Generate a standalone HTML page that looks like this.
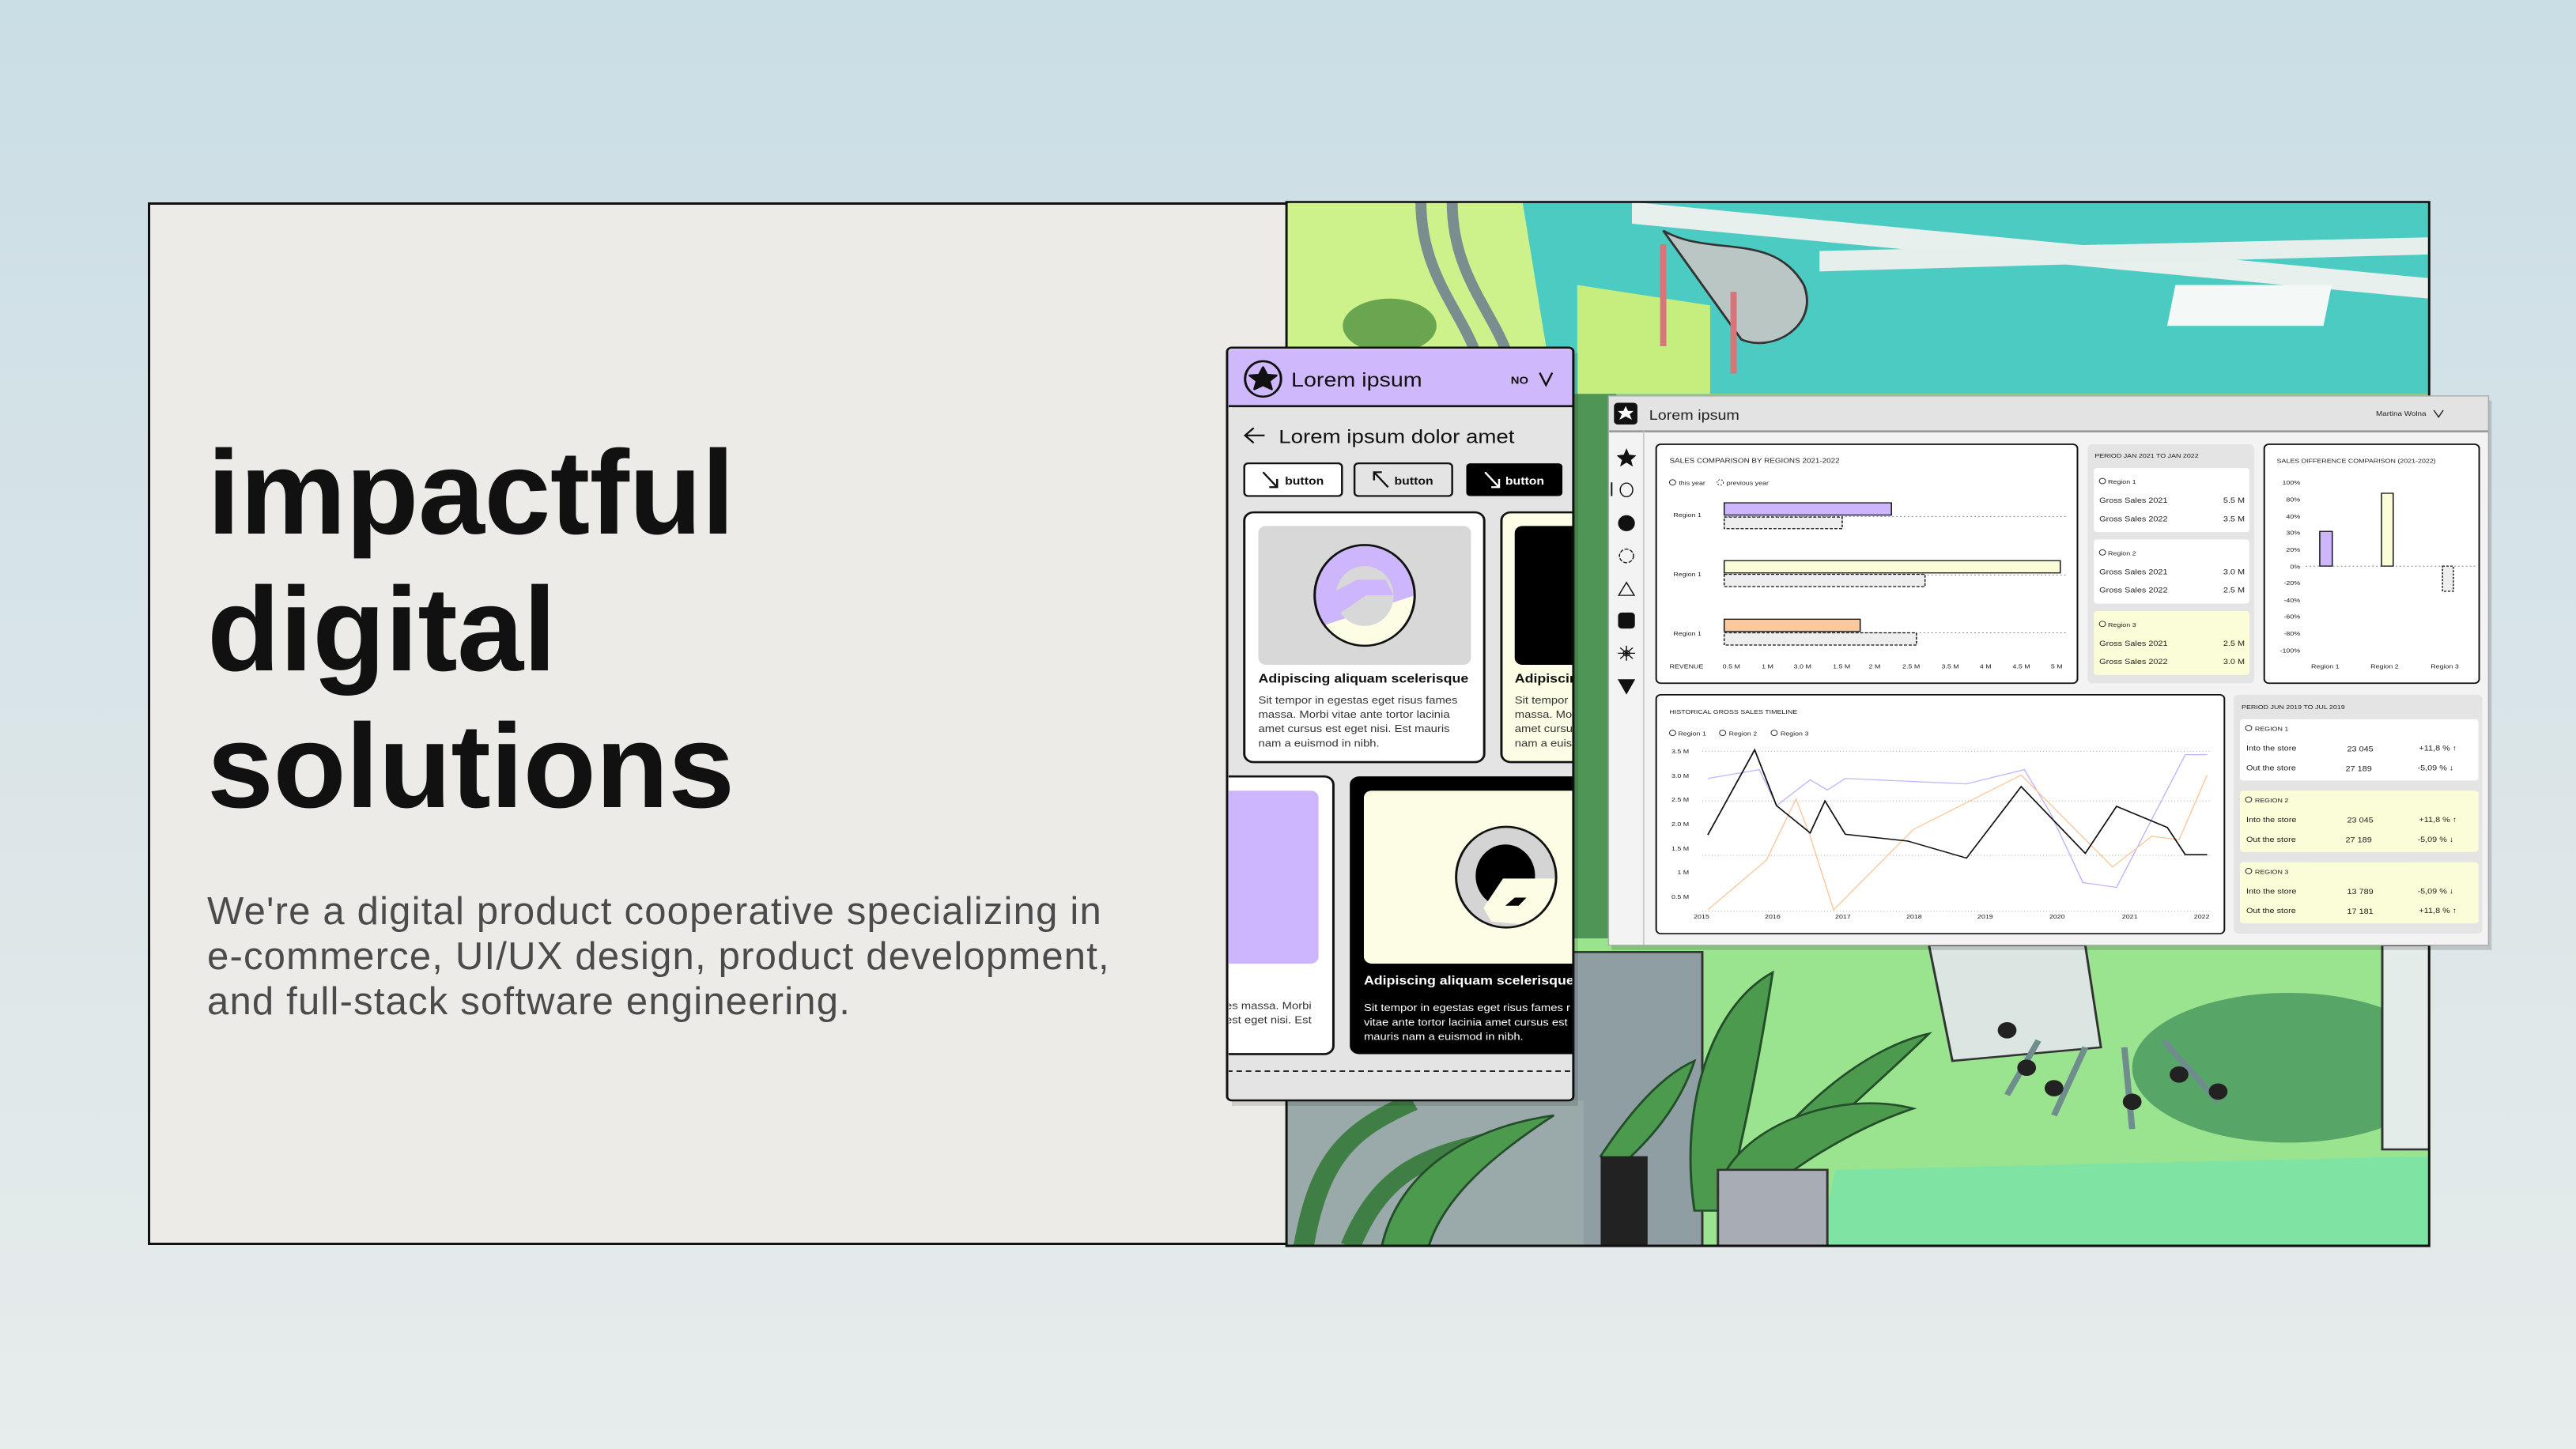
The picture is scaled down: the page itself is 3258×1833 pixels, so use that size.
<!DOCTYPE html>
<html><head><meta charset="utf-8">
<style>
html,body{margin:0;padding:0}
body{width:3258px;height:1833px;position:relative;overflow:hidden;background:linear-gradient(180deg,#cadee6 0%,#dde6e8 60%,#e7ecec 100%);font-family:"Liberation Sans",sans-serif}
#card{position:absolute;left:187px;top:256px;width:2884px;height:1319px;box-sizing:border-box;border:3px solid #111;background:#ecebe8}
h1{position:absolute;left:262px;top:536px;margin:0;font-size:151px;line-height:173px;font-weight:bold;color:#111;letter-spacing:-0.5px}
p{position:absolute;left:262px;top:1125px;margin:0;font-size:49px;line-height:57px;color:#4b4b4b;white-space:nowrap;letter-spacing:1.2px}
svg{position:absolute;left:0;top:0}
</style></head><body>
<div id="card"></div>
<h1>impactful<br>digital<br>solutions</h1>
<p>We're a digital product cooperative specializing in<br>e-commerce, UI/UX design, product development,<br>and full-stack software engineering.</p>
<svg width="3258" height="1833" viewBox="0 0 3258 1833" font-family="Liberation Sans, sans-serif">
<defs>
<clipPath id="ill"><rect x="79" y="19" width="1460" height="1531"/></clipPath>
<clipPath id="mob"><rect x="4" y="234" width="440" height="1102" rx="6"/></clipPath>
<clipPath id="dash"><rect x="490" y="303" width="1126" height="807"/></clipPath>
</defs>
<g transform="translate(1550,240) scale(0.9885,0.861)">
<!-- illustration -->
<g clip-path="url(#ill)">
<rect x="78" y="18" width="1462" height="1534" fill="#b7e27f"/>
<polygon points="78,18 450,18 450,320 78,330" fill="#cdf28c"/>
<polygon points="380,18 1540,18 1540,300 420,300" fill="#4ccbc3"/>
<polygon points="520,18 1540,130 1540,160 520,50" fill="#e8f0ee"/>
<polygon points="760,90 1540,70 1540,95 760,120" fill="#e6efec"/>
<rect x="1240" y="140" width="200" height="60" fill="#f4f8f6" transform="skewX(-10)"/>
<polygon points="450,140 620,170 620,300 450,300" fill="#c5ee7f"/>
<path d="M250,18 C250,150 330,200 330,300 M290,18 C290,150 370,200 370,300" stroke="#7a8e90" stroke-width="14" fill="none"/>
<path d="M560,60 C620,100 700,60 740,140 C760,200 700,240 660,220 Z" fill="#b9c6c4" stroke="#333" stroke-width="3"/>
<path d="M560,80 L560,230 M650,150 L650,270" stroke="#d8757a" stroke-width="8"/>
<ellipse cx="210" cy="200" rx="60" ry="40" fill="#6aa650"/>
<rect x="78" y="300" width="1462" height="820" fill="#8ccf7a"/>
<rect x="430" y="300" width="70" height="820" fill="#4f9656"/>
<rect x="78" y="1100" width="1462" height="452" fill="#9be48f"/>
<polygon points="780,1440 1540,1420 1540,1552 760,1552" fill="#7fe3a4"/>
<ellipse cx="1360" cy="1290" rx="200" ry="110" fill="#58a568"/>
<rect x="1480" y="1110" width="60" height="300" fill="#e3ece8" stroke="#333" stroke-width="3"/>
<path d="M900,1110 L1100,1110 L1120,1260 L930,1280 Z" fill="#dbe6e3" stroke="#333" stroke-width="3"/>
<g stroke="#6f8d8d" stroke-width="8" fill="none"><path d="M1040,1250 L1000,1330 M1100,1260 L1060,1360 M1150,1260 L1160,1380 M1200,1250 L1270,1340"/></g>
<g fill="#222"><circle cx="1000" cy="1235" r="12"/><circle cx="1025" cy="1290" r="12"/><circle cx="1060" cy="1320" r="12"/><circle cx="1160" cy="1340" r="12"/><circle cx="1270" cy="1325" r="12"/><circle cx="1220" cy="1300" r="12"/></g>
<rect x="440" y="1120" width="170" height="432" fill="#8f9ea3" stroke="#333" stroke-width="3"/>
<rect x="78" y="1338" width="380" height="214" fill="#9aa9a9"/>
<path d="M100,1552 C120,1420 160,1380 240,1340 M160,1552 C200,1440 260,1420 330,1400" stroke="#3f7f45" stroke-width="26" fill="none"/>
<g fill="#4c9a4e" stroke="#244d2a" stroke-width="3">
<path d="M600,1500 C580,1350 620,1200 700,1150 C680,1300 660,1400 640,1500 Z"/>
<path d="M650,1480 C720,1350 820,1260 900,1240 C820,1330 740,1400 680,1500 Z"/>
<path d="M630,1470 C650,1380 780,1320 880,1350 C800,1380 720,1440 660,1500 Z"/>
<path d="M200,1552 C220,1450 300,1380 420,1360 C340,1420 280,1480 260,1552 Z"/>
<path d="M480,1420 C520,1350 560,1300 600,1280 C580,1350 540,1400 500,1440 Z"/>
</g>
<rect x="630" y="1440" width="140" height="112" fill="#a8adb5" stroke="#333" stroke-width="3"/>
<rect x="480" y="1420" width="60" height="132" fill="#222"/>
</g>
<rect x="78" y="18" width="1462" height="1534" fill="none" stroke="#111" stroke-width="3"/>

<!-- dashboard -->
<rect x="494" y="310" width="1126" height="807" fill="#000" opacity="0.15"/>
<g clip-path="url(#dash)">
<rect x="490" y="303" width="1126" height="807" fill="#f3f3f3"/>
<rect x="490" y="303" width="1126" height="52" fill="#e3e3e3"/>
<line x1="490" y1="355" x2="1616" y2="355" stroke="#999" stroke-width="3"/>
<rect x="497" y="313" width="30" height="32" rx="5" fill="#111"/>
<path d="M512,318 L515,325 L522,325 L517,330 L520,338 L512,333 L504,338 L507,330 L502,325 L509,325 Z" fill="#fff"/>
<text x="542" y="338" font-size="20" fill="#222">Lorem ipsum</text>
<text x="1472" y="332" font-size="10" fill="#222">Martina Wolna</text>
<path d="M1546,324 L1552,334 L1558,324" stroke="#222" stroke-width="1.5" fill="none"/>
<line x1="535" y1="355" x2="535" y2="1110" stroke="#ccc" stroke-width="2"/>
<g fill="#111" stroke="#111" stroke-width="1.5">
<path d="M513,382 L516,390 L524,391 L518,397 L520,405 L513,400 L506,405 L508,397 L502,391 L510,390 Z"/>
<ellipse cx="513" cy="441" rx="8" ry="10" fill="none"/>
<ellipse cx="513" cy="490" rx="10" ry="11"/>
<ellipse cx="513" cy="538" rx="9" ry="10" fill="none" stroke-dasharray="5 2"/>
<path d="M503,596 L513,577 L523,596 Z" fill="none"/>
<rect x="503" y="622" width="20" height="22" rx="4"/>
<circle cx="513" cy="681" r="4" fill="none"/><path d="M513,670 v22 M502,681 h22 M505,673 l16,16 M521,673 l-16,16" fill="none"/>
<path d="M503,720 L523,720 L513,740 Z"/>
</g>
<line x1="494" y1="430" x2="494" y2="450" stroke="#111" stroke-width="2"/>
<!-- panel1 -->
<rect x="551" y="374" width="539" height="351" rx="6" fill="#fff" stroke="#111" stroke-width="2"/>
<g font-size="10" fill="#222">
<text x="568" y="401">SALES COMPARISON BY REGIONS  2021-2022</text>
<text x="580" y="434" font-size="9">this year</text><circle cx="572" cy="430" r="4" fill="none" stroke="#222"/>
<circle cx="633" cy="430" r="4" fill="none" stroke="#222" stroke-dasharray="2 2"/><text x="641" y="434" font-size="9">previous year</text>
<text x="573" y="481" font-size="9">Region 1</text><text x="573" y="568" font-size="9">Region 1</text><text x="573" y="655" font-size="9">Region 1</text>
<g font-size="9"><text x="568" y="703">REVENUE</text><text x="636" y="703">0.5 M</text><text x="686" y="703">1 M</text><text x="727" y="703">3.0 M</text><text x="777" y="703">1.5 M</text><text x="823" y="703">2 M</text><text x="866" y="703">2.5 M</text><text x="916" y="703">3.5 M</text><text x="965" y="703">4 M</text><text x="1007" y="703">4.5 M</text><text x="1056" y="703">5 M</text></g>
</g>
<g stroke="#777" stroke-width="1" stroke-dasharray="2 3"><line x1="638" y1="480" x2="1075" y2="480"/><line x1="638" y1="566" x2="1075" y2="566"/><line x1="638" y1="651" x2="1075" y2="651"/></g>
<g stroke="#111" stroke-width="1.5">
<rect x="638" y="460" width="214" height="18" fill="#cdb6fb"/>
<rect x="638" y="481" width="151" height="17" fill="#eee" stroke-dasharray="4 2"/>
<rect x="638" y="545" width="430" height="18" fill="#fbfdd8"/>
<rect x="638" y="565" width="257" height="18" fill="#eee" stroke-dasharray="4 2"/>
<rect x="638" y="631" width="174" height="18" fill="#fbc9a0"/>
<rect x="638" y="651" width="246" height="18" fill="#eee" stroke-dasharray="4 2"/>
</g>
<!-- panel2 -->
<rect x="1103" y="374" width="213" height="351" rx="6" fill="#e4e4e4"/>
<text x="1112" y="394" font-size="9" fill="#222">PERIOD JAN 2021 TO JAN 2022</text>
<g font-size="11" fill="#222">
<rect x="1111" y="409" width="199" height="94" rx="4" fill="#fff"/>
<circle cx="1122" cy="428" r="4" fill="none" stroke="#222"/><text x="1129" y="432" font-size="9">Region 1</text>
<text x="1118" y="460">Gross Sales 2021</text><text x="1304" y="460" text-anchor="end">5.5 M</text>
<text x="1118" y="487">Gross Sales 2022</text><text x="1304" y="487" text-anchor="end">3.5 M</text>
<rect x="1111" y="514" width="199" height="94" rx="4" fill="#fff"/>
<circle cx="1122" cy="533" r="4" fill="none" stroke="#222"/><text x="1129" y="537" font-size="9">Region 2</text>
<text x="1118" y="565">Gross Sales 2021</text><text x="1304" y="565" text-anchor="end">3.0 M</text>
<text x="1118" y="592">Gross Sales 2022</text><text x="1304" y="592" text-anchor="end">2.5 M</text>
<rect x="1111" y="619" width="199" height="94" rx="4" fill="#fbfdd8"/>
<circle cx="1122" cy="638" r="4" fill="none" stroke="#222"/><text x="1129" y="642" font-size="9">Region 3</text>
<text x="1118" y="670">Gross Sales 2021</text><text x="1304" y="670" text-anchor="end">2.5 M</text>
<text x="1118" y="697">Gross Sales 2022</text><text x="1304" y="697" text-anchor="end">3.0 M</text>
</g>
<!-- panel3 -->
<rect x="1329" y="374" width="275" height="351" rx="6" fill="#fff" stroke="#111" stroke-width="2"/>
<g font-size="9" fill="#222">
<text x="1345" y="401">SALES DIFFERENCE COMPARISON (2021-2022)</text>
<g text-anchor="end"><text x="1375" y="433">100%</text><text x="1375" y="458">80%</text><text x="1375" y="483">40%</text><text x="1375" y="507">30%</text><text x="1375" y="532">20%</text><text x="1375" y="557">0%</text><text x="1375" y="581">-20%</text><text x="1375" y="606">-40%</text><text x="1375" y="630">-60%</text><text x="1375" y="655">-80%</text><text x="1375" y="680">-100%</text></g>
<text x="1389" y="703">Region 1</text><text x="1465" y="703">Region 2</text><text x="1542" y="703">Region 3</text>
</g>
<line x1="1382" y1="553" x2="1600" y2="553" stroke="#777" stroke-dasharray="2 3"/>
<rect x="1400" y="502" width="16" height="51" fill="#cdb6fb" stroke="#111" stroke-width="1.5"/>
<rect x="1479" y="446" width="15" height="107" fill="#fbfdd8" stroke="#111" stroke-width="1.5"/>
<rect x="1557" y="553" width="14" height="37" fill="#eee" stroke="#111" stroke-width="1.5" stroke-dasharray="3 2"/>
<!-- panel4 -->
<rect x="551" y="742" width="727" height="351" rx="6" fill="#fff" stroke="#111" stroke-width="2"/>
<g font-size="9" fill="#222">
<text x="568" y="770">HISTORICAL GROSS SALES TIMELINE</text>
<circle cx="572" cy="798" r="4" fill="none" stroke="#222"/><text x="579" y="802">Region 1</text>
<circle cx="636" cy="798" r="4" fill="none" stroke="#222"/><text x="644" y="802">Region 2</text>
<circle cx="702" cy="798" r="4" fill="none" stroke="#222"/><text x="710" y="802">Region 3</text>
<g text-anchor="end"><text x="593" y="828">3.5 M</text><text x="593" y="864">3.0 M</text><text x="593" y="899">2.5 M</text><text x="593" y="935">2.0 M</text><text x="593" y="971">1.5 M</text><text x="593" y="1006">1 M</text><text x="593" y="1042">0.5 M</text></g>
<text x="599" y="1071">2015</text><text x="690" y="1071">2016</text><text x="780" y="1071">2017</text><text x="871" y="1071">2018</text><text x="962" y="1071">2019</text><text x="1054" y="1071">2020</text><text x="1147" y="1071">2021</text><text x="1239" y="1071">2022</text>
</g>
<g stroke="#999" stroke-dasharray="1 3"><line x1="610" y1="825" x2="1260" y2="825"/><line x1="610" y1="898" x2="1260" y2="898"/><line x1="610" y1="978" x2="1260" y2="978"/><line x1="610" y1="1060" x2="1260" y2="1060"/></g>
<polyline points="617,865 683,852 705,905 748,867 770,882 793,865 948,873 1022,852 1055,915 1097,1018 1140,1025 1228,830 1256,830" fill="none" stroke="#c7b3fb" stroke-width="1.5"/>
<polyline points="617,1058 692,985 730,895 748,950 778,1058 880,940 1018,860 1135,995 1185,950 1220,955 1256,860" fill="none" stroke="#f9c9a0" stroke-width="1.5"/>
<polyline points="617,948 677,823 705,905 748,945 767,898 793,947 873,957 948,982 1018,877 1100,975 1140,906 1205,937 1228,977 1256,977" fill="none" stroke="#111" stroke-width="1.8"/>
<!-- panel5 -->
<rect x="1290" y="742" width="318" height="351" rx="6" fill="#e4e4e4"/>
<text x="1300" y="763" font-size="9" fill="#222">PERIOD JUN 2019 TO JUL 2019</text>
<g font-size="11" fill="#222">
<rect x="1298" y="778" width="305" height="90" rx="4" fill="#fff"/>
<circle cx="1309" cy="791" r="4" fill="none" stroke="#222"/><text x="1317" y="795" font-size="9">REGION 1</text>
<text x="1306" y="824">Into the store</text><text x="1435" y="825">23 045</text><text x="1527" y="824">+11,8 % ↑</text>
<text x="1306" y="853">Out the store</text><text x="1433" y="854">27 189</text><text x="1525" y="853">-5,09 % ↓</text>
<rect x="1298" y="883" width="305" height="90" rx="4" fill="#fbfdd8"/>
<circle cx="1309" cy="896" r="4" fill="none" stroke="#222"/><text x="1317" y="900" font-size="9">REGION 2</text>
<text x="1306" y="929">Into the store</text><text x="1435" y="930">23 045</text><text x="1527" y="929">+11,8 % ↑</text>
<text x="1306" y="958">Out the store</text><text x="1433" y="959">27 189</text><text x="1525" y="958">-5,09 % ↓</text>
<rect x="1298" y="988" width="305" height="90" rx="4" fill="#fbfdd8"/>
<circle cx="1309" cy="1001" r="4" fill="none" stroke="#222"/><text x="1317" y="1005" font-size="9">REGION 3</text>
<text x="1306" y="1034">Into the store</text><text x="1435" y="1035">13 789</text><text x="1525" y="1034">-5,09 % ↓</text>
<text x="1306" y="1063">Out the store</text><text x="1435" y="1064">17 181</text><text x="1527" y="1063">+11,8 % ↑</text>
</g>
</g>
<rect x="490" y="303" width="1126" height="807" fill="none" stroke="#aaa" stroke-width="1.5"/>

<!-- mobile -->
<rect x="8" y="240" width="443" height="1106" fill="#000" opacity="0.12"/>
<rect x="2" y="232" width="443" height="1106" rx="6" fill="#e4e4e4"/>
<g clip-path="url(#mob)">
<rect x="2" y="232" width="443" height="86" fill="#cfb8fb"/>
<line x1="2" y1="318" x2="445" y2="318" stroke="#111" stroke-width="3"/>
<ellipse cx="48" cy="278" rx="23" ry="26" fill="none" stroke="#111" stroke-width="3"/>
<path d="M48,261 L53,272 L65,273 L56,281 L59,293 L48,287 L37,293 L40,281 L31,273 L43,272 Z" fill="#111" stroke="#111" stroke-width="3" stroke-linejoin="round"/>
<text x="84" y="289" font-size="29" fill="#111">Lorem ipsum</text>
<text x="365" y="285" font-size="15" font-weight="bold" fill="#111">NO</text>
<path d="M402,269 L410,287 L418,269" fill="none" stroke="#111" stroke-width="2.5"/>
<path d="M50,361 L26,361 M36,350 L25,361 L36,372" fill="none" stroke="#111" stroke-width="2.5"/>
<text x="68" y="372" font-size="28" fill="#111">Lorem ipsum dolor amet</text>
<rect x="24" y="402" width="125" height="48" rx="5" fill="#fff" stroke="#111" stroke-width="2.5"/>
<rect x="165" y="402" width="125" height="48" rx="5" fill="#e4e4e4" stroke="#111" stroke-width="2.5"/>
<rect x="308" y="402" width="123" height="48" rx="5" fill="#000"/>
<g font-size="16" font-weight="bold"><text x="76" y="433" fill="#111">button</text><text x="216" y="433" fill="#111">button</text><text x="358" y="433" fill="#fff">button</text></g>
<path d="M48,415 L66,437 M56,437 L66,437 L66,425" stroke="#111" stroke-width="2.5" fill="none"/>
<path d="M208,437 L190,415 M190,427 L190,415 L200,415" stroke="#111" stroke-width="2.5" fill="none"/>
<path d="M332,415 L350,437 M340,437 L350,437 L350,425" stroke="#fff" stroke-width="2.5" fill="none"/>
<!-- card1 -->
<rect x="24" y="474" width="307" height="367" rx="12" fill="#fff" stroke="#111" stroke-width="3"/>
<rect x="42" y="494" width="272" height="204" rx="10" fill="#d8d8d8"/>
<ellipse cx="178" cy="596" rx="64" ry="74" fill="#fdfde6"/>
<path d="M114,596 A64,74 0 0 1 242,596 L 126,640 A64,74 0 0 1 114,596 Z" fill="#cdb6fb"/>
<ellipse cx="178" cy="597" rx="37" ry="44" fill="#d8d8d8" stroke="none"/>
<path d="M140,590 L168,573 L205,573 L215,596 L180,596 L126,638 Z" fill="#cdb6fb"/>
<ellipse cx="178" cy="596" rx="64" ry="74" fill="none" stroke="#111" stroke-width="3"/>
<text x="42" y="724" font-size="18" font-weight="bold" fill="#111">Adipiscing aliquam scelerisque</text>
<g font-size="15" fill="#333"><text x="42" y="755">Sit tempor in egestas eget risus fames</text><text x="42" y="776">massa. Morbi vitae ante tortor lacinia</text><text x="42" y="797">amet cursus est eget nisi. Est mauris</text><text x="42" y="818">nam a euismod in nibh.</text></g>
<!-- card2 -->
<rect x="353" y="474" width="120" height="367" rx="12" fill="#fdfde6" stroke="#111" stroke-width="3"/>
<rect x="370" y="494" width="100" height="204" rx="10" fill="#000"/>
<text x="370" y="724" font-size="18" font-weight="bold" fill="#111">Adipiscing</text>
<g font-size="15" fill="#333"><text x="370" y="755">Sit tempor</text><text x="370" y="776">massa. Morbi</text><text x="370" y="797">amet cursus</text><text x="370" y="818">nam a euismod</text></g>
<!-- card3 -->
<rect x="-40" y="862" width="178" height="408" rx="12" fill="#fff" stroke="#111" stroke-width="3"/>
<rect x="-20" y="883" width="139" height="254" rx="10" fill="#cdb6fb"/>
<g font-size="15" fill="#333"><text x="0" y="1204">es massa. Morbi</text><text x="0" y="1225">est eget nisi. Est</text></g>
<!-- card4 -->
<rect x="159" y="862" width="320" height="408" rx="12" fill="#000"/>
<rect x="177" y="883" width="300" height="254" rx="10" fill="#fdfde6"/>
<ellipse cx="359" cy="1010" rx="64" ry="74" fill="#d4d4d4"/>
<ellipse cx="358" cy="1008" rx="38" ry="46" fill="#000"/>
<path d="M330,1055 L355,1012 L423,1012 L410,1060 L385,1080 L340,1075 Z" fill="#fdfde6"/>
<path d="M358,1052 L370,1040 L385,1040 L375,1052 Z" fill="#000"/>
<ellipse cx="359" cy="1010" rx="64" ry="74" fill="none" stroke="#111" stroke-width="3"/>
<text x="177" y="1168" font-size="18" font-weight="bold" fill="#fff">Adipiscing aliquam scelerisque</text>
<g font-size="15" fill="#fff"><text x="177" y="1207">Sit tempor in egestas eget risus fames r</text><text x="177" y="1228">vitae ante tortor lacinia amet cursus est</text><text x="177" y="1249">mauris nam a euismod in nibh.</text></g>
<line x1="2" y1="1295" x2="445" y2="1295" stroke="#111" stroke-width="2" stroke-dasharray="7 5"/>
</g>
<rect x="2" y="232" width="443" height="1106" rx="6" fill="none" stroke="#111" stroke-width="3"/>
</g>
</svg>
</body></html>
